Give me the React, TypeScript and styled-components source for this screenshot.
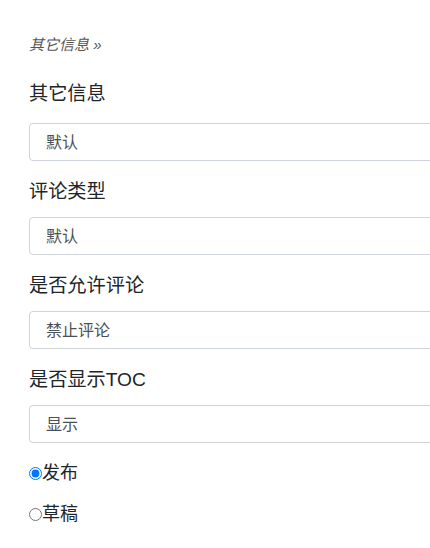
import React from "react";
import styled, { createGlobalStyle } from "styled-components";

const Global = createGlobalStyle`
  html, body { margin: 0; padding: 0; background: #fff; overflow: hidden; }
  body { font-family: "Liberation Sans", "Noto Sans CJK SC", sans-serif; color: #212529; }
`;

const Page = styled.div`
  width: 430px;
  height: 548px;
  overflow: hidden;
  padding: 35px 0 0 29px;
  box-sizing: border-box;
`;

const Crumb = styled.div`
  font-size: 15px;
  font-style: italic;
  color: #555;
  line-height: 20px;
  margin-bottom: 25px;
`;

const Group = styled.div`
  display: flex;
  flex-direction: column;
  margin-bottom: 17px;
`;

const Label = styled.label<{ $first?: boolean }>`
  font-size: 19.2px;
  line-height: 28px;
  margin-bottom: ${(p) => (p.$first ? 15 : 11)}px;
`;

const Select = styled.select`
  width: 460px;
  height: 38px;
  box-sizing: border-box;
  border: 1px solid #ced4da;
  border-radius: 4px;
  background: #fff;
  padding: 0 16px;
  font-size: 16px;
  color: #495057;
  font-family: "Liberation Sans", "Noto Sans CJK SC", sans-serif;
  appearance: none;
  outline: none;
`;

const Radios = styled.div`
  display: flex;
  flex-direction: column;
  gap: 14px;
`;

const RadioRow = styled.label`
  display: flex;
  align-items: center;
  font-size: 18px;
  line-height: 27px;
  input {
    margin: 0;
    width: 13px;
    height: 13px;
  }
`;

const groups = [
  ["其它信息", "默认"],
  ["评论类型", "默认"],
  ["是否允许评论", "禁止评论"],
  ["是否显示TOC", "显示"],
];

export default function App() {
  return (
    <>
      <Global />
      <Page>
        <Crumb>其它信息 »</Crumb>
        {groups.map(([l, v], i) => (
          <Group key={l}>
            <Label $first={i === 0}>{l}</Label>
            <Select defaultValue={v}>
              <option>{v}</option>
            </Select>
          </Group>
        ))}
        <Radios>
          <RadioRow>
            <input type="radio" name="st" defaultChecked />
            发布
          </RadioRow>
          <RadioRow>
            <input type="radio" name="st" />
            草稿
          </RadioRow>
        </Radios>
      </Page>
    </>
  );
}
